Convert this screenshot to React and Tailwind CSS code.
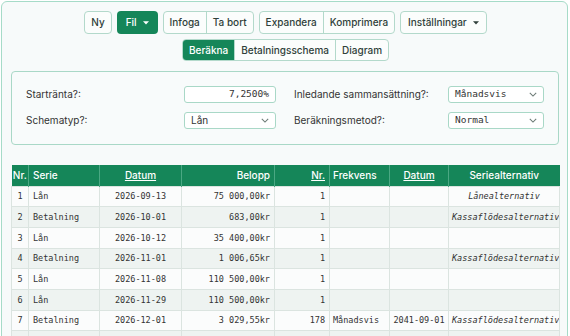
import React from "react";

const sans = { fontFamily: "Inter, 'Noto Sans', sans-serif" };
const mono = { fontFamily: "'DejaVu Sans Mono', 'Liberation Mono', monospace" };

const Caret = ({ className }) => (
  <svg viewBox="0 0 8 5" className={className} fill="currentColor">
    <path d="M0 0h8L4 4.5z" />
  </svg>
);

const Chevron = () => (
  <svg viewBox="0 0 10 6" className="w-[8px] h-[5px] text-[#6b7a75]" fill="none" stroke="currentColor" strokeWidth="1.3">
    <path d="M1 1l4 4 4-4" />
  </svg>
);

const btn = "px-[6px] flex items-center text-[10px] font-medium text-[#2f3f3a]";

const Group = ({ items, active, h = "h-[21px]" }) => (
  <div className="flex border border-[#b3d9cb] rounded-[4px] overflow-hidden bg-[#fbfdfc]">
    {items.map((t, i) => (
      <div
        key={t}
        className={`${btn} ${h} ${i > 0 ? "border-l border-[#b3d9cb]" : ""} ${
          active === t ? "bg-[#158659] text-white" : ""
        }`}
      >
        {t}
      </div>
    ))}
  </div>
);

const Field = ({ label, children }) => (
  <>
    <div className="text-[10px] text-[#333] flex items-center h-[17px]">{label}</div>
    {children}
  </>
);

const Select = ({ value, isMono }) => (
  <div className="h-[17px] border border-[#a9d8c7] rounded-[3px] bg-white flex items-center justify-between pl-[6px] pr-[6px]">
    <span className={isMono ? "text-[9.5px] text-[#333]" : "text-[10px] text-[#333]"} style={isMono ? mono : sans}>
      {value}
    </span>
    <Chevron />
  </div>
);

const rows = [
  ["1", "Lån", "2026-09-13", "75 000,00kr", "1", "", "", "Lånealternativ"],
  ["2", "Betalning", "2026-10-01", "683,00kr", "1", "", "", "Kassaflödesalternativ"],
  ["3", "Lån", "2026-10-12", "35 400,00kr", "1", "", "", ""],
  ["4", "Betalning", "2026-11-01", "1 006,65kr", "1", "", "", "Kassaflödesalternativ"],
  ["5", "Lån", "2026-11-08", "110 500,00kr", "1", "", "", ""],
  ["6", "Lån", "2026-11-29", "110 500,00kr", "1", "", "", ""],
  ["7", "Betalning", "2026-12-01", "3 029,55kr", "178", "Månadsvis", "2041-09-01", "Kassaflödesalternativ"],
  ["", "", "", "", "", "", "", ""],
];

const widths = [17, 71, 82, 93, 55, 60, 59, 111];
const bodyAlign = ["text-center", "text-left pl-[4px]", "text-center", "text-right pr-[4px]", "text-right pr-[4px]", "text-left pl-[3px]", "text-center", "text-center italic px-[3px]"];

export default function App() {
  return (
    <div className="w-[570px] h-[336px] overflow-hidden bg-white" style={sans}>
      <div className="ml-px mt-px w-[567px] min-h-[400px] border border-[#a6dbc8] rounded-[6px] bg-[#f7fafa] pl-[9px] pr-[7px] pt-[9px]">
        <div className="flex justify-center gap-[5px]">
          <Group items={["Ny"]} />
          <div className={`${btn} h-[23px] bg-[#158659] text-white rounded-[4px] gap-[6px] px-[9px]`}>
            Fil <Caret className="w-[6px] h-[4px]" />
          </div>
          <Group items={["Infoga", "Ta bort"]} />
          <Group items={["Expandera", "Komprimera"]} />
          <div className={`${btn} h-[23px] border border-[#b3d9cb] rounded-[4px] gap-[6px] px-[7px] bg-[#fbfdfc]`}>
            Inställningar <Caret className="w-[6px] h-[4px]" />
          </div>
        </div>
        <div className="flex justify-center mt-[5px]">
          <Group items={["Beräkna", "Betalningsschema", "Diagram"]} active="Beräkna" h="h-[20px]" />
        </div>

        <div className="mt-[10px] w-[548px] border border-[#a9d8c7] rounded-[4px] bg-[#f8fbfb] px-[14px] pt-[14px] pb-[15px] flex gap-[18px]">
          <div className="grid grid-cols-[158px_92px] gap-y-[9px]">
            <Field label="Startränta?:">
              <div className="h-[17px] border border-[#a9d8c7] rounded-[3px] bg-white flex items-center justify-end pr-[6px] text-[9.5px] text-[#333]" style={mono}>
                7,2500%
              </div>
            </Field>
            <Field label="Schematyp?:">
              <Select value="Lån" />
            </Field>
          </div>
          <div className="grid grid-cols-[154px_96px] gap-y-[9px]">
            <Field label="Inledande sammansättning?:">
              <Select value="Månadsvis" isMono />
            </Field>
            <Field label="Beräkningsmetod?:">
              <Select value="Normal" isMono />
            </Field>
          </div>
        </div>

        <table className="mt-[20px] w-[548px] table-fixed border-collapse">
          <colgroup>
            {widths.map((w, i) => (
              <col key={i} style={{ width: w }} />
            ))}
          </colgroup>
          <thead>
            <tr className="h-[21px] bg-[#158659] text-white text-[10px] font-medium">
              <th className="text-center border-r border-[#4aa883] font-medium">Nr.</th>
              <th className="text-left pl-[4px] border-r border-[#4aa883] font-medium">Serie</th>
              <th className="text-center border-r border-[#4aa883] font-medium underline">Datum</th>
              <th className="text-right pr-[4px] border-r border-[#4aa883] font-medium">Belopp</th>
              <th className="text-right pr-[4px] border-r border-[#4aa883] font-medium underline">Nr.</th>
              <th className="text-left pl-[3px] border-r border-[#4aa883] font-medium">Frekvens</th>
              <th className="text-center border-r border-[#4aa883] font-medium underline">Datum</th>
              <th className="text-center font-medium">Seriealternativ</th>
            </tr>
          </thead>
          <tbody>
            {rows.map((r, ri) => (
              <tr key={ri} className={`h-[20.7px] ${ri % 2 ? "bg-[#eef3f1]" : "bg-[#fbfcfc]"}`}>
                {r.map((c, ci) => (
                  <td
                    key={ci}
                    className={`${bodyAlign[ci]} border border-[#dbe4e0] text-[8.5px] leading-[12px] text-[#333] whitespace-nowrap overflow-hidden`}
                    style={mono}
                  >
                    {c}
                  </td>
                ))}
              </tr>
            ))}
          </tbody>
        </table>
      </div>
    </div>
  );
}
